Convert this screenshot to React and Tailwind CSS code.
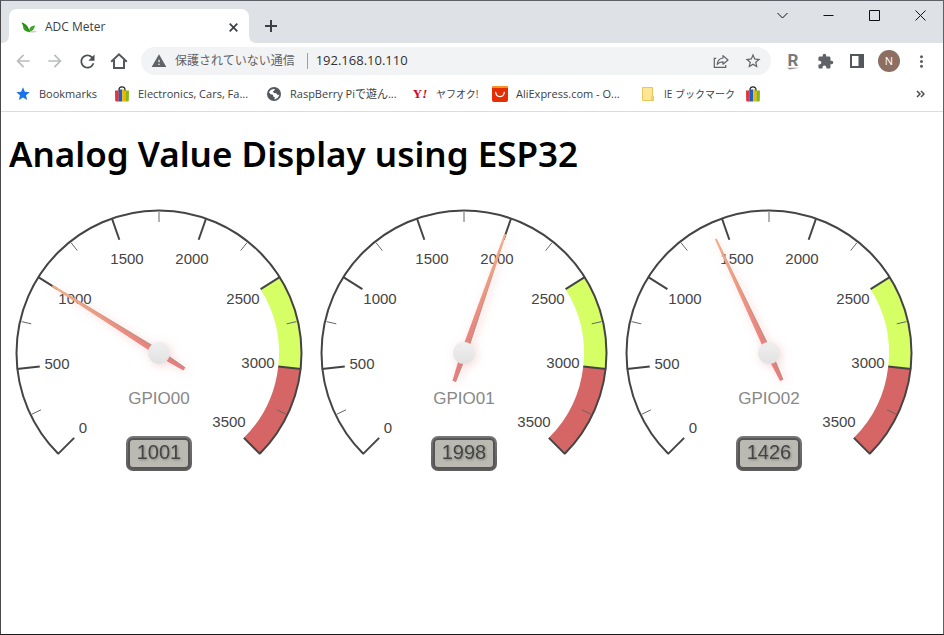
import React from "react";
import {
  MdArrowBack,
  MdArrowForward,
  MdRefresh,
  MdWarning,
  MdStarBorder,
  MdStar,
  MdExtension,
  MdMoreVert,
} from "react-icons/md";

const UI_FONT = "font-['Open_Sans','Noto_Sans_CJK_JP',sans-serif]";

/* ---------- small drawings ---------- */

function LeafIcon() {
  return (
    <svg width="16" height="16" viewBox="0 0 16 16" aria-hidden="true">
      <ellipse cx="11" cy="12.600" rx="4.500" ry="1" fill="#d0d0d0" />
      <path d="M0.500 3.500C4.500 4.200 7.500 6.800 8.600 12.800C5 13.200 2.400 11 2.200 8.500C2.200 6.500 1.200 5 0.500 3.500Z" fill="#35a01c" />
      <path d="M1.500 4.500C4.500 6.500 7 9.500 8.600 12.800" stroke="#1f6d12" strokeWidth="1" fill="none" />
      <path d="M8.300 12.500C7.800 9.500 9.500 7 14 6.500C13.200 10 11.500 12.300 8.300 12.500Z" fill="#2f9a1a" />
      <path d="M8.500 12L12.800 7.600" stroke="#7cc750" strokeWidth="0.700" />
    </svg>
  );
}

function HomeIcon() {
  return (
    <svg width="20" height="20" viewBox="0 0 20 20" fill="none" stroke="#54575b" strokeWidth="2" aria-hidden="true">
      <path d="M2.200 10.800L10 3.300L17.800 10.800" />
      <path d="M5 9V17H15V9" />
    </svg>
  );
}

function ShareIcon() {
  return (
    <svg width="16" height="16" viewBox="0 0 16 16" fill="none" stroke="#5f6368" strokeWidth="1.200" aria-hidden="true">
      <path d="M3.200 5.300H1.300V14.400H12.700V12" />
      <path d="M10 2.600L15 7L10 11.200V8.800C7.500 8.700 5.800 9.500 4.200 11.500C4.600 8 6.600 5.400 10 5Z" strokeLinejoin="round" />
    </svg>
  );
}

function RakutenIcon() {
  return (
    <span className="flex flex-col items-center leading-none text-[#77797c]">
      <span className="font-['Roboto',sans-serif] text-[17px] leading-[14px] font-bold">R</span>
      <svg width="14" height="3" viewBox="0 0 14 3" aria-hidden="true">
        <path d="M1 0.800H13.500L3.500 2.600Z" fill="#8a8c8f" />
      </svg>
    </span>
  );
}

function SidePanelIcon() {
  return (
    <svg width="14" height="14" viewBox="0 0 14 14" aria-hidden="true">
      <path fillRule="evenodd" d="M0 0H14V14H0ZM2 2V12H8.500V2Z" fill="#54575b" />
    </svg>
  );
}

function BagIcon() {
  return (
    <svg width="16" height="16" viewBox="0 0 16 16" className="shrink-0" aria-hidden="true">
      <path d="M1 4.500H4.800V15.500H2.600Q1.300 15.500 1.200 14.300Z" fill="#e0353a" />
      <path d="M4.700 3.500H8.300V15.500H4.700Z" fill="#1b62c6" />
      <path d="M8.200 3.500H11.500V15.500H8.200Z" fill="#f5b400" />
      <path d="M11.400 4.500H15L14.800 14.300Q14.700 15.500 13.400 15.500H11.400Z" fill="#86b817" />
      <path d="M4.900 4.500C4.900 -0.300 11.100 -0.300 11.100 4.500" fill="none" stroke="#222" strokeWidth="1.100" />
    </svg>
  );
}

function GlobeIcon() {
  return (
    <svg width="16" height="16" viewBox="0 0 16 16" className="shrink-0" aria-hidden="true">
      <circle cx="8" cy="8" r="7" fill="#54575b" />
      <path d="M3 6.300C4.200 4 6.500 2.800 9 3.100L8.600 4.600L6.800 5.400L7.600 6.800L10.600 7.400L11.800 9.200L13.400 8.600C13 11 11 13.200 8.400 13.500L8.800 11.600L7.200 10.400L7 8.700L4.600 8.200Z" fill="#fff" />
      <path d="M9 3.100L11.300 4.600L9.600 6.200L8 5.600Z" fill="#54575b" />
    </svg>
  );
}

function YahooIcon() {
  return (
    <span className="flex w-4 shrink-0 justify-center font-['Liberation_Serif',serif] text-[13px] leading-4 font-black text-[#d5002d]">
      Y<i>!</i>
    </span>
  );
}

function AliIcon() {
  return (
    <svg width="16" height="16" viewBox="0 0 16 16" className="shrink-0" aria-hidden="true">
      <rect width="16" height="16" rx="2" fill="#e62e04" />
      <path d="M2 0H14Q16 0 16 2H0Q0 0 2 0Z" fill="#f5961e" />
      <path d="M3.700 6.300C4.200 12 11.800 12 12.300 6.300" fill="none" stroke="#fff" strokeWidth="1.300" strokeLinecap="round" />
    </svg>
  );
}

function FolderIcon() {
  return (
    <svg width="16" height="16" viewBox="0 0 16 16" className="shrink-0" aria-hidden="true">
      <path d="M2.500 1.500H12.500V10.500H13.500V14.500H2.500Z" fill="#ffe694" stroke="#e8c65c" />
      <path d="M11.500 14V10.800H13.300V14Z" fill="#fbd667" stroke="#e8c65c" strokeWidth="0.600" />
    </svg>
  );
}

/* ---------- browser frame ---------- */

function WindowButton({ label, children }) {
  return (
    <button type="button" aria-label={label} className="flex h-7 w-[46px] items-center justify-center">
      <svg width="11" height="11" viewBox="0 0 11 11" fill="none" stroke="#111" aria-hidden="true">
        {children}
      </svg>
    </button>
  );
}

function TabStrip() {
  return (
    <div className="flex h-[42px] items-start bg-[#dee1e6]">
      <div className="flex h-full items-end pt-2">
        <svg width="8" height="8" viewBox="0 0 8 8" aria-hidden="true">
          <path d="M8 0V8H0Q8 8 8 0Z" fill="#fff" />
        </svg>
        <div className="flex h-full w-60 items-center gap-2 rounded-t-lg bg-white pt-0.5 pr-2 pl-3">
          <LeafIcon />
          <span className="flex-1 text-xs text-[#3c4043]">ADC Meter</span>
          <button type="button" aria-label="Close tab" className="flex size-4 items-center justify-center">
            <svg width="9" height="9" viewBox="0 0 9 9" stroke="#3c4043" strokeWidth="1.700" aria-hidden="true">
              <path d="M0.700 0.700L8.300 8.300M8.300 0.700L0.700 8.300" />
            </svg>
          </button>
        </div>
        <svg width="8" height="8" viewBox="0 0 8 8" aria-hidden="true">
          <path d="M0 0V8H8Q0 8 0 0Z" fill="#fff" />
        </svg>
      </div>
      <button type="button" aria-label="New tab" className="mt-[11px] flex size-7 items-center justify-center">
        <svg width="12" height="12" viewBox="0 0 12 12" stroke="#3c4043" strokeWidth="2" aria-hidden="true">
          <path d="M6 0V12M0 6H12" />
        </svg>
      </button>
      <div className="ml-auto flex">
        <WindowButton label="Search tabs">
          <path d="M0.500 3L5.500 8L10.500 3" />
        </WindowButton>
        <WindowButton label="Minimize">
          <path d="M0.500 5.500H10.500" />
        </WindowButton>
        <WindowButton label="Maximize">
          <path d="M0.500 0.500H10.500V10.500H0.500Z" />
        </WindowButton>
        <WindowButton label="Close">
          <path d="M0.500 0.500L10.500 10.500M10.500 0.500L0.500 10.500" />
        </WindowButton>
      </div>
    </div>
  );
}

function ToolButton({ label, children }) {
  return (
    <button type="button" aria-label={label} className="flex h-7 w-8 shrink-0 items-center justify-center text-[#5f6368]">
      {children}
    </button>
  );
}

function Toolbar() {
  return (
    <div className="flex h-9 items-center bg-white px-1.5">
      <ToolButton label="Back">
        <MdArrowBack size={20} color="#babcbe" />
      </ToolButton>
      <ToolButton label="Forward">
        <MdArrowForward size={20} color="#babcbe" />
      </ToolButton>
      <ToolButton label="Reload">
        <MdRefresh size={21} color="#4b4e52" />
      </ToolButton>
      <ToolButton label="Home">
        <HomeIcon />
      </ToolButton>
      <div className="mx-1.5 flex h-7 min-w-0 flex-1 items-center rounded-full bg-[#f1f3f4] pr-0.5 pl-2.5">
        <button type="button" className="flex shrink-0 items-center gap-2 text-xs text-[#5f6368]">
          <MdWarning size={16} />
          保護されていない通信
        </button>
        <span className="mr-2 ml-3 h-4 w-px bg-[#9aa0a6]" />
        <input
          type="text"
          aria-label="Address"
          defaultValue="192.168.10.110"
          className="min-w-0 flex-1 bg-transparent text-[13px] text-[#303134] outline-none"
        />
        <ToolButton label="Share this page">
          <ShareIcon />
        </ToolButton>
        <ToolButton label="Bookmark this page">
          <MdStarBorder size={18} />
        </ToolButton>
      </div>
      <ToolButton label="Rakuten">
        <RakutenIcon />
      </ToolButton>
      <ToolButton label="Extensions">
        <MdExtension size={17} />
      </ToolButton>
      <ToolButton label="Side panel">
        <SidePanelIcon />
      </ToolButton>
      <ToolButton label="Profile">
        <span className="flex size-[22px] items-center justify-center rounded-full bg-[#8d6e63] text-[11px] text-white">N</span>
      </ToolButton>
      <ToolButton label="Menu">
        <MdMoreVert size={19} />
      </ToolButton>
    </div>
  );
}

function Bookmark({ icon, label, width, small }) {
  return (
    <a href="#" aria-label={label || "eBay"} className="flex shrink-0 items-center gap-2">
      {icon}
      {label && (
        <span className={`${width} whitespace-nowrap ${small ? "text-[10px]" : "text-[11px]"}`}>{label}</span>
      )}
    </a>
  );
}

function BookmarkBar() {
  return (
    <nav className="flex h-[33px] items-center gap-4 border-b border-[#dadce0] bg-white pr-[18px] pb-0.5 pl-3.5 text-[#3c4043]">
      <Bookmark icon={<MdStar size={16} color="#1a73e8" className="shrink-0" />} label="Bookmarks" width="w-[59px]" />
      <Bookmark icon={<BagIcon />} label="Electronics, Cars, Fa..." width="w-28" />
      <Bookmark icon={<GlobeIcon />} label="RaspBerry Piで遊ん..." width="w-[106px]" />
      <Bookmark icon={<YahooIcon />} label="ヤフオク!" width="w-10" small />
      <Bookmark icon={<AliIcon />} label="AliExpress.com - O..." width="w-[108px]" />
      <Bookmark icon={<FolderIcon />} label="IE ブックマーク" width="w-[65px]" small />
      <Bookmark icon={<BagIcon />} />
      <button type="button" aria-label="More bookmarks" className="ml-auto">
        <svg width="9" height="8" viewBox="0 0 9 8" fill="none" stroke="#4b4e52" strokeWidth="1.500" aria-hidden="true">
          <path d="M1 1L4 4L1 7M5 1L8 4L5 7" />
        </svg>
      </button>
    </nav>
  );
}

/* ---------- gauges ---------- */

const MAX = 3500;
const SCALE_RADIUS = 142.5;
const LABELS = [
  { text: "0", x: -76, y: 75 },
  { text: "500", x: -102, y: 11 },
  { text: "1000", x: -84, y: -54 },
  { text: "1500", x: -32, y: -94 },
  { text: "2000", x: 33, y: -94 },
  { text: "2500", x: 84, y: -54 },
  { text: "3000", x: 99, y: 10 },
  { text: "3500", x: 70, y: 69 },
];
const MAJOR = [0, 500, 1000, 1500, 2000, 2500, 3000, 3500];
const MINOR = [250, 750, 1250, 1750, 2250, 2750, 3250];

const angleOf = (value) => -135 + (value / MAX) * 270;

function point(value, radius) {
  const a = (angleOf(value) * Math.PI) / 180;
  return `${(Math.sin(a) * radius).toFixed(2)} ${(-Math.cos(a) * radius).toFixed(2)}`;
}

function band(from, to) {
  return `M${point(from, 120)}L${point(from, 142)}A142 142 0 0 1 ${point(to, 142)}L${point(to, 120)}A120 120 0 0 0 ${point(from, 120)}Z`;
}

function Gauge({ id, title, value }) {
  return (
    <svg
      width="300"
      height="300"
      viewBox="-150 -150 300 300"
      role="img"
      aria-label={`${title}: ${value}`}
      className="font-['Liberation_Sans',Arial,sans-serif]"
    >
      <defs>
        <linearGradient id={`${id}-needle`} gradientUnits="userSpaceOnUse" x1="0" y1="-126" x2="0" y2="0">
          <stop offset="0" stopColor="#f2ae86" />
          <stop offset="1" stopColor="#ec7c7c" />
        </linearGradient>
        <linearGradient id={`${id}-shade`} gradientUnits="userSpaceOnUse" x1="0" y1="-126" x2="0" y2="0">
          <stop offset="0" stopColor="#a09a88" stopOpacity="0.1" />
          <stop offset="1" stopColor="#a09a88" stopOpacity="0.8" />
        </linearGradient>
        <linearGradient id={`${id}-hub`} x1="0" y1="0" x2="0" y2="1">
          <stop offset="0" stopColor="#efefef" />
          <stop offset="0.5" stopColor="#e9e9e9" />
          <stop offset="1" stopColor="#e2e2e2" />
        </linearGradient>
        <linearGradient id={`${id}-box`} x1="0" y1="0" x2="0" y2="1">
          <stop offset="0" stopColor="#777" />
          <stop offset="1" stopColor="#5c5c5c" />
        </linearGradient>
        <filter id={`${id}-glow`} filterUnits="userSpaceOnUse" x="-150" y="-150" width="300" height="300">
          <feDropShadow dx="2" dy="2" stdDeviation="5" floodColor="#e08080" floodOpacity="0.3" />
        </filter>
        <filter id={`${id}-text`} x="-20%" y="-20%" width="140%" height="150%">
          <feDropShadow dx="1" dy="1" stdDeviation="1" floodColor="#000" floodOpacity="0.3" />
        </filter>
      </defs>

      <path d={band(2500, 3000)} fill="#d6ff65" />
      <path d={band(3000, 3500)} fill="#d66565" />

      <g fill="none" stroke="#444" strokeWidth="2">
        <path d={`M${point(0, SCALE_RADIUS)}A${SCALE_RADIUS} ${SCALE_RADIUS} 0 1 1 ${point(MAX, SCALE_RADIUS)}`} />
        {MAJOR.map((v) => (
          <path key={v} d={`M${point(v, 143)}L${point(v, 120)}`} />
        ))}
      </g>
      <g stroke="#666" strokeWidth="1">
        {MINOR.map((v) => (
          <path key={v} d={`M${point(v, 141)}L${point(v, 131)}`} />
        ))}
      </g>

      <g fill="#444" fontSize="15" textAnchor="middle">
        {LABELS.map((l) => (
          <text key={l.text} x={l.x} y={l.y + 5}>
            {l.text}
          </text>
        ))}
      </g>

      <text y="51" fill="#888" fontSize="17" textAnchor="middle">
        {title}
      </text>

      <rect x="-33" y="83" width="66" height="35" rx="7" fill={`url(#${id}-box)`} />
      <rect x="-31" y="85" width="62" height="31" rx="5" fill="#555" />
      <rect x="-29" y="87" width="58" height="27" rx="3" fill="#babab2" />
      <text y="106" fill="#444" fontSize="20" textAnchor="middle" filter={`url(#${id}-text)`}>
        {value}
      </text>

      <g filter={`url(#${id}-glow)`}>
        <g transform={`rotate(${angleOf(value)})`}>
          <path d="M-1 -126L1 -126L3.200 0L1.800 30H-1.800L-3.200 0Z" fill={`url(#${id}-needle)`} />
          <path d="M0.600 -126H1L3.200 0L1.800 30H0.900L1.500 0Z" fill={`url(#${id}-shade)`} />
        </g>
        <circle r="11" fill={`url(#${id}-hub)`} />
      </g>
    </svg>
  );
}

export default function App() {
  return (
    <div className={`flex min-h-screen flex-col border border-t-[#5f6067] border-r-[#5f6067] border-b-[#1b1b1b] border-l-[#4a4a4c] bg-white ${UI_FONT}`}>
      <header>
        <TabStrip />
        <Toolbar />
        <BookmarkBar />
      </header>
      <main className="flex-1 px-2 pt-[18px]">
        <h1 className="font-['Noto_Sans',sans-serif] text-[35px] leading-12 font-semibold text-black">
          Analog Value Display using ESP32
        </h1>
        <div className="mt-[25px] flex flex-wrap gap-[5px]">
          <Gauge id="g0" title="GPIO00" value={1001} />
          <Gauge id="g1" title="GPIO01" value={1998} />
          <Gauge id="g2" title="GPIO02" value={1426} />
        </div>
      </main>
    </div>
  );
}
